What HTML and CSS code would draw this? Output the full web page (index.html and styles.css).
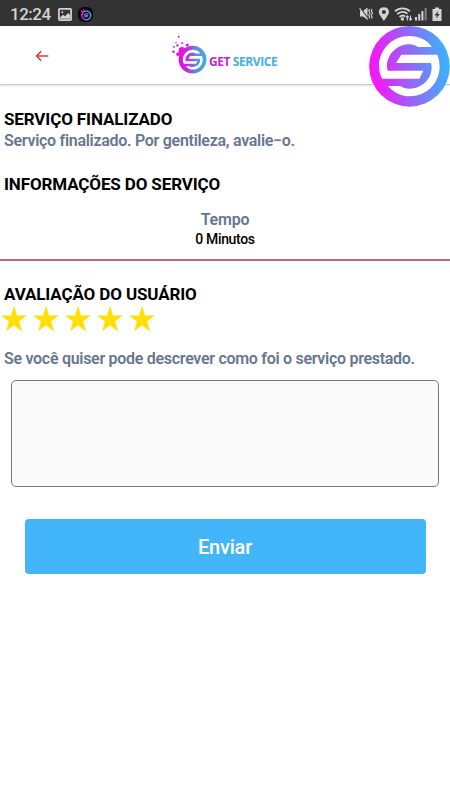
FILE: index.html
```
<!DOCTYPE html>
<html lang="pt-BR">
<head>
  <meta charset="utf-8">
  <meta name="viewport" content="width=device-width, initial-scale=1">
  <title>Get Service</title>
  <link rel="stylesheet" href="styles.css">
</head>

<body>

<svg class="defs" width="0" height="0">
  <defs>
    <linearGradient id="brand" x1="0" y1="0.55" x2="1" y2="0.45">
      <stop offset="0" stop-color="#f714f5"/>
      <stop offset="0.15" stop-color="#e426f6"/>
      <stop offset="0.5" stop-color="#9566f6"/>
      <stop offset="1" stop-color="#36b6fb"/>
    </linearGradient>
    <linearGradient id="brand-small" x1="0" y1="0" x2="1" y2="0">
      <stop offset="0" stop-color="#e80be0"/>
      <stop offset="0.3" stop-color="#c32ae2"/>
      <stop offset="0.65" stop-color="#5d8fdd"/>
      <stop offset="1" stop-color="#35b4e6"/>
    </linearGradient>
    <symbol id="s-mark" viewBox="0 0 252 252">
      <path d="M48 164H160L172 140H65Q63 134 63 127C63 90 94 61 130 61C139 61 148 64 156 69H198C184 48 160 36 130 36C80 36 39 76 39 127Q39 147 48 164Z"/>
      <path d="M106 92H214Q221 108 221 127C221 178 182 217 130 217C105 217 82 205 66 186H102C110 191 120 194 130 194C168 194 197 166 197 130Q197 123 195 117H90Z"/>
    </symbol>
    <symbol id="star" viewBox="0 0 26 26">
      <path d="M13 0L16 9.9H26L18 15.9L21.1 26L13 19.8L4.9 26L8 15.9L0 9.9H10Z"/>
    </symbol>
  </defs>
</svg>

<div class="status-bar">
  <span class="clock">12:24</span>
  <svg class="status-photo" width="14" height="13" viewBox="0 0 14 13">
    <rect x="0.9" y="0.9" width="12.2" height="11.2" rx="0.8" fill="none" stroke="#d4d4d4" stroke-width="1.7"/>
    <path d="M2 10.8V9.4L5 6.7L7 8.2L10.3 5L12 7V10.8Z" fill="#d4d4d4"/>
    <circle cx="4.3" cy="4.2" r="1" fill="#d4d4d4"/>
  </svg>
  <svg class="status-app" width="15" height="15" viewBox="0 0 15 15">
    <rect width="15" height="15" rx="6" fill="#08060d"/>
    <circle cx="8.3" cy="8.3" r="4.4" fill="none" stroke="url(#brand-small)" stroke-width="1.5"/>
    <path d="M10.8 6.9H7L6.2 8.3H10L9.3 9.8H6" fill="none" stroke="#718de0" stroke-width="1"/>
    <path d="M3 3.5L6 6M3 7L5 8M5.5 2.5L7 5" stroke="#b052cf" stroke-width="1.2"/>
  </svg>
  <svg class="status-icons" width="84" height="16" viewBox="0 0 84 16">
    <g fill="#d4d4d4">
      <path d="M1 5H4L8.5 1.5V13.5L4 10.4H1Z"/>
      <path d="M20.5 8.4C18.6 4.8 21 1.2 24.9 1.2C28.8 1.2 31.2 4.8 29.3 8.4L24.9 15Z"/>
      <rect x="56" y="11" width="2" height="3.5"/>
      <rect x="59.2" y="8" width="2" height="6.5"/>
      <rect x="62.4" y="5" width="2" height="9.5"/>
      <rect x="65.6" y="2" width="2" height="12.5" opacity="0.5"/>
      <path d="M73.5 3H76V1.5H80V3H82.5V15H73.5Z"/>
    </g>
    <circle cx="24.9" cy="6" r="2" fill="#333"/>
    <path d="M79.3 4.8L75.5 9.4H78L76.8 13L80.8 8H78.4Z" fill="#333"/>
    <path d="M1.2 1.6L9.2 12.6" stroke="#333" stroke-width="1.2"/>
    <path d="M0.6 2.4L8.4 13.4" stroke="#d4d4d4" stroke-width="1.2"/>
    <path d="M10.5 3L9.8 5L11 7L9.8 9L10.8 12.5M13 3L12.3 5L13.5 7L12.3 9L13.3 12.5" fill="none" stroke="#d4d4d4" stroke-width="1.1"/>
    <path d="M36 5.3C40.2 1.3 46.8 1.3 51 5.3M38.2 8.2C41.3 5.2 45.7 5.2 48.5 7.7M40.6 11C42.5 9.2 44.5 9.2 46 10.5" fill="none" stroke="#d4d4d4" stroke-width="1.8"/>
    <circle cx="43.4" cy="13" r="1.7" fill="#d4d4d4"/>
    <path d="M48.3 14.5V10M46.9 11.4L48.3 9.9L49.7 11.4M51.5 9.5V14M50.1 12.6L51.5 14.1L52.9 12.6" fill="none" stroke="#d4d4d4" stroke-width="1.1"/>
  </svg>
</div>

<div class="header">
  <a class="back" href="#" aria-label="Voltar">
    <svg width="14" height="12" viewBox="0 0 14 12">
      <path d="M13.3 6H2M6.2 1.2L1.6 6L6.2 10.8" fill="none" stroke="#dc3d42" stroke-width="1.5"/>
    </svg>
  </a>
  <div class="logo">
    <svg width="38" height="42" viewBox="0 0 38 42">
      <g fill="#e312dc">
        <circle cx="10" cy="15.2" r="3.2"/>
        <circle cx="5.9" cy="19.3" r="1.8"/>
        <circle cx="5.5" cy="10.4" r="1.2"/>
        <circle cx="1.5" cy="16.7" r="1.3"/>
        <circle cx="15.3" cy="10" r="1.5"/>
        <circle cx="10.2" cy="8.2" r="1"/>
        <circle cx="6.7" cy="1.8" r="1"/>
        <circle cx="4" cy="7.5" r="0.7"/>
        <circle cx="2" cy="12" r="0.9"/>
      </g>
      <circle cx="20.6" cy="24.6" r="13.9" fill="url(#brand-small)"/>
      <circle cx="9.5" cy="18" r="3.2" fill="#e312dc"/>
      <use href="#s-mark" x="6.6" y="10.9" width="27.5" height="27.5" fill="#fff"/>
    </svg>
    <span class="logo-text"><b>GET</b> SERVICE</span>
  </div>
  <svg class="badge" width="84" height="84" viewBox="0 0 252 252">
    <circle cx="130.5" cy="127" r="121" fill="url(#brand)"/>
    <use href="#s-mark" width="252" height="252" fill="#fff"/>
  </svg>
</div>

<div class="content">
  <h2 class="title title-done">SERVIÇO FINALIZADO</h2>
  <p class="text text-done">Serviço finalizado. Por gentileza, avalie−o.</p>

  <h2 class="title title-info">INFORMAÇÕES DO SERVIÇO</h2>
  <div class="time">
    <div class="time-label">Tempo</div>
    <div class="time-value">0 Minutos</div>
  </div>

  <h2 class="title title-rating">AVALIAÇÃO DO USUÁRIO</h2>
  <div class="stars">
    <svg><use href="#star"/></svg>
    <svg><use href="#star"/></svg>
    <svg><use href="#star"/></svg>
    <svg><use href="#star"/></svg>
    <svg><use href="#star"/></svg>
  </div>
  <p class="text text-describe">Se você quiser pode descrever como foi o serviço prestado.</p>

  <textarea class="comment"></textarea>
  <button class="send">Enviar</button>
</div>

</body>
</html>
```

FILE: styles.css
```
* {
  box-sizing: border-box;
}
body {
  margin: 0;
  background: #fff;
  color: #000;
  font-family: Roboto, "Liberation Sans", sans-serif;
}
svg {
  display: block;
}
.defs {
  position: absolute;
}

.status-bar {
  display: flex;
  align-items: center;
  height: 26px;
  padding: 2px 7px 0 10px;
  background: #333;
}
.clock {
  width: 41px;
  margin-right: 7px;
  color: #d4d4d4;
  font-size: 17px;
  font-weight: 500;
  letter-spacing: -0.5px;
  line-height: 24px;
  white-space: nowrap;
}
.status-app {
  margin-left: 6px;
}
.status-icons {
  margin-left: auto;
}

.header {
  position: relative;
  display: flex;
  align-items: flex-start;
  height: 59px;
  background: #fff;
  border-bottom: 1px solid #c9c9c9;
  box-shadow: 0 1px 2px rgba(0, 0, 0, 0.12);
}
.back {
  margin: 24px 0 0 35px;
}
.logo {
  display: flex;
  margin: 9px 0 0 123px;
}
.logo-text {
  margin: 18px 0 0 -1px;
  color: #45aee0;
  font-family: "Open Sans", "Noto Sans", sans-serif;
  font-size: 12px;
  font-weight: 700;
  letter-spacing: -0.42px;
  line-height: 18px;
  white-space: nowrap;
}
.logo-text b {
  color: #c01fd3;
  font-weight: 700;
}
/* hangs over the status bar and the header line */
.badge {
  position: absolute;
  top: -2px;
  right: 0;
}

.content {
  display: flex;
  flex-direction: column;
}
.title {
  margin: 0 4px;
  font-size: 17px;
  font-weight: 700;
  letter-spacing: -0.13px;
  line-height: 22px;
  white-space: nowrap;
}
.title-done {
  margin-top: 23px;
}
.title-info {
  margin-top: 21px;
}
.title-rating {
  margin-top: 22px;
}
.text {
  margin: 0 4px;
  color: #67768f;
  font-size: 16px;
  font-weight: 600;
  letter-spacing: -0.29px;
  line-height: 22px;
  white-space: nowrap;
}
.text-describe {
  margin-top: 16px;
}

.time {
  height: 66px;
  padding-top: 14px;
  border-bottom: 2px solid #b9687f;
  text-align: center;
}
.time-label {
  color: #67768f;
  font-size: 16px;
  font-weight: 600;
  letter-spacing: -0.2px;
  line-height: 21px;
}
.time-value {
  font-size: 14px;
  font-weight: 500;
  letter-spacing: -0.35px;
  line-height: 18px;
}

.stars {
  display: flex;
  gap: 6px;
  margin-left: 0.5px;
}
.stars svg {
  width: 26px;
  height: 27px;
  fill: #fddf05;
}

.comment {
  height: 107px;
  margin: 10px 11px 0;
  background: #fafafa;
  border: 1px solid #777;
  border-radius: 5px;
  resize: none;
}
.send {
  height: 55px;
  margin: 32px 24.5px 0;
  padding: 1px 0 0;
  background: #43b5fb;
  border: 0;
  border-radius: 4px;
  color: #fff;
  font-family: inherit;
  font-size: 20px;
  font-weight: 500;
  letter-spacing: -0.2px;
}
```
